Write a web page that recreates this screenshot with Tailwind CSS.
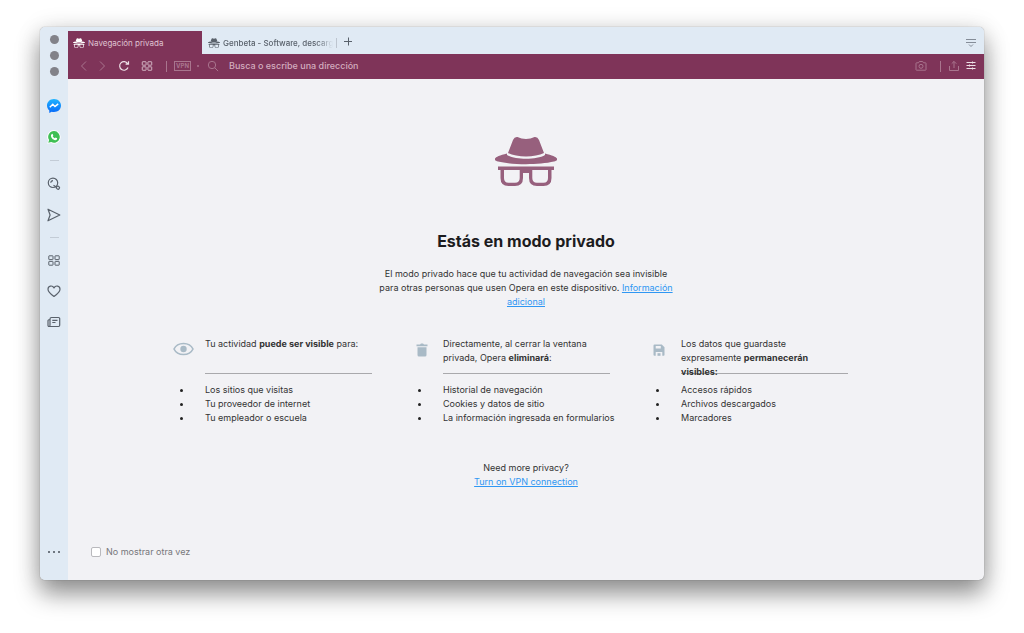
<!DOCTYPE html>
<html lang="es">
<head>
  <meta charset="UTF-8">
  <meta name="viewport" content="width=device-width, initial-scale=1.0">
  <title>Navegación privada</title>
  <script src="https://cdn.jsdelivr.net/npm/@tailwindcss/browser@4"></script>
</head>
<body class="flex min-h-screen bg-white px-10 pt-[27px] pb-[53px] font-[Inter,sans-serif] text-[#333]">

  <!-- Iconos compartidos -->
  <svg class="hidden">
    <symbol id="incognito" viewBox="0 0 62 50">
      <path d="M13 17 18 4Q19.500 .5 22.500 1C25 2 28 3 31 3S37 2 39.500 1Q42.500 .5 44 4L49 17C40 21.500 22 21.500 13 17Z"/>
      <path d="M12 17.500C-1 20.500-3 24 3 25.500C18 29 44 29 59 25.500C65 24 63 20.500 50 17.500L50 19C42 24 20 24 12 19Z"/>
      <path fill-rule="evenodd" d="M3 30.500H59V34H56.500V42Q56.500 50 48.500 50H42Q34 50 34 42V37H28V42Q28 50 20 50H13.500Q5.500 50 5.500 42V34H3ZM9 34V42Q9 46.700 13.500 46.700H20Q24.700 46.700 24.700 42V34ZM37.300 34V42Q37.300 46.700 42 46.700H48.500Q53 46.700 53 42V34Z"/>
    </symbol>
    <symbol id="grid" viewBox="0 0 12 11">
      <g fill="none" stroke="currentColor"><rect x=".8" y=".8" width="4.200" height="3.800" rx=".4"/><rect x="7" y=".8" width="4.200" height="3.800" rx=".4"/><rect x=".8" y="6.400" width="4.200" height="3.800" rx=".4"/><rect x="7" y="6.400" width="4.200" height="3.800" rx=".4"/></g>
    </symbol>
  </svg>

  <div class="flex flex-1 overflow-hidden rounded-[5px] bg-[#f2f2f5] shadow-[0_0_1px_#0008,0_14px_24px_#0006,0_2px_24px_#0002]">

    <!-- Barra lateral -->
    <aside class="flex w-7 shrink-0 flex-col items-center bg-[#e0eaf4] text-[#59616b]">
      <div class="mt-2 flex flex-col gap-[7px]">
        <button aria-label="Cerrar" class="size-[9px] rounded-full bg-[#828289]"></button>
        <button aria-label="Minimizar" class="size-[9px] rounded-full bg-[#828289]"></button>
        <button aria-label="Maximizar" class="size-[9px] rounded-full bg-[#828289]"></button>
      </div>
      <button aria-label="Messenger" class="mt-[22px]">
        <svg class="size-4" viewBox="0 0 16 16">
          <defs><linearGradient id="msg" x2="0" y2="1"><stop stop-color="#1fb4ff"/><stop offset="1" stop-color="#0768f8"/></linearGradient></defs>
          <path fill="url(#msg)" d="M8 1C3.900 1 1 3.900 1 7.600C1 9.700 1.900 11.300 3.300 12.500V15L5.600 13.800C6.400 14 7.200 14.100 8 14.100C12.100 14.100 15 11.300 15 7.600S12.100 1 8 1Z"/>
          <path fill="none" stroke="#fff" stroke-width="1.400" d="m3.800 9.300 3-3.100L9 8.600l3.200-2.700"/>
        </svg>
      </button>
      <button aria-label="WhatsApp" class="mt-[15px]">
        <svg class="size-4" viewBox="0 0 16 16">
          <path fill="#fff" d="M8 1.300A6.600 6.600 0 0 1 8 14.700Q6.500 14.700 4.800 13.900L1.300 14.800 2.200 11.500A6.700 6.700 0 0 1 8 1.300Z"/>
          <path fill="#3fbf54" d="M8.100 2.100A5.800 5.800 0 1 1 5.200 13L2.300 13.800 3.100 11A5.800 5.800 0 0 1 8.100 2.100Z"/>
          <path fill="#fff" d="M6 4.900Q6.600 4.600 6.800 5.200L7.300 6.300Q7.300 6.600 6.700 7.200Q7.400 8.600 8.900 9.300L9.600 8.500 11.200 9.300Q11.200 11.200 9.300 11.200C7 10.900 4.700 8.800 5 6.300Q5.200 5.200 6 4.900Z"/>
        </svg>
      </button>
      <hr class="mt-[15px] w-[9px] border-[#c3ccd6]">
      <button aria-label="Buscar" class="mt-[15px]">
        <svg class="size-4" viewBox="0 0 16 16" fill="none" stroke="currentColor" stroke-width="1.200">
          <circle cx="7" cy="6.800" r="4.700"/><path d="M4.800 6.800A2.200 2.200 0 0 1 7 4.600M7.500 9.200 11 11.500"/><rect x="10.300" y="10.300" width="3.200" height="2.800" rx="1.300" transform="rotate(35 12 11.700)"/>
        </svg>
      </button>
      <button aria-label="Mi Flow" class="mt-[15px]">
        <svg class="size-4" viewBox="0 0 16 16" fill="none" stroke="currentColor" stroke-width="1.200" stroke-linejoin="round">
          <path d="m2 2.200 11.800 5.800L2 13.800 4.100 8Z"/>
        </svg>
      </button>
      <hr class="mt-[14px] w-[9px] border-[#c3ccd6]">
      <button aria-label="Acceso rápido" class="mt-[17px]"><svg class="h-[11px] w-3"><use href="#grid"/></svg></button>
      <button aria-label="Favoritos" class="mt-[17px]">
        <svg class="size-4" viewBox="0 0 16 16" fill="none" stroke="currentColor" stroke-width="1.200" stroke-linejoin="round">
          <path d="M8 13.500C5 11.300 2 8.900 2 6.200C2 2.700 6.400 1.800 8 4.900C9.600 1.800 14 2.700 14 6.200C14 8.900 11 11.300 8 13.500Z"/>
        </svg>
      </button>
      <button aria-label="Noticias" class="mt-[15px]">
        <svg class="size-4" viewBox="0 0 16 16" fill="none" stroke="currentColor" stroke-width="1.200">
          <path d="M4 12.500H12.500Q13.700 12.500 13.700 11.300V4.700Q13.700 3.500 12.500 3.500H5.500Q4 3.500 4 5V11.300Q4 12.500 3 12.500Q2 12.500 2 11.300V6.500Q2 5.500 4 5.500M6.300 6.300H11.500M6.300 8.500H9.500"/>
        </svg>
      </button>
      <button aria-label="Más" class="mt-auto mb-[27px] flex gap-[3px]">
        <span class="size-[2px] rounded-full bg-[#4a515b]"></span>
        <span class="size-[2px] rounded-full bg-[#4a515b]"></span>
        <span class="size-[2px] rounded-full bg-[#4a515b]"></span>
      </button>
    </aside>

    <div class="flex min-w-0 flex-1 flex-col">

      <!-- Pestañas -->
      <div class="flex h-[27px] items-end bg-[#e0eaf4] text-[8px]">
        <button class="flex h-[23px] w-[134px] items-center gap-[3px] bg-[#7f3459] pl-[5px] text-[#dfc3d1]">
          <svg class="h-[10px] w-3 fill-white"><use href="#incognito"/></svg>
          Navegación privada
        </button>
        <button class="flex h-[23px] w-[134px] items-center gap-[3px] pl-[6px] text-[#59616b]">
          <svg class="h-[10px] w-3 shrink-0 fill-[#59616b]"><use href="#incognito"/></svg>
          <span class="w-[110px] overflow-hidden mask-r-from-85% text-left font-medium whitespace-nowrap">Genbeta - Software, descargas</span>
        </button>
        <button aria-label="Nueva pestaña" class="flex h-[23px] items-center">
          <span class="h-[10px] border-l border-[#bdc5cf]"></span>
          <svg class="ml-[6px] mb-1 size-[10px]" viewBox="0 0 10 10" fill="none" stroke="#59616b"><path d="M1 5.500h8M5.500 1.500v8"/></svg>
        </button>
        <button aria-label="Menú de pestañas" class="mr-2 mb-[6px] ml-auto">
          <svg class="size-[10px]" viewBox="0 0 10 10" fill="none" stroke="#858d98"><path d="M0 1.500h10M0 4.500h10"/><path d="m3 6.500 2 2 2-2"/></svg>
        </button>
      </div>

      <!-- Barra de direcciones -->
      <div class="flex h-[25px] items-center bg-[#7f3459] pr-2 pb-px pl-[11px] text-[#a9758e]">
        <button aria-label="Atrás"><svg class="size-[10px]" viewBox="0 0 10 10" fill="none" stroke="currentColor"><path d="m7 .5L2.500 5 7 9.500"/></svg></button>
        <button aria-label="Adelante" class="ml-2"><svg class="size-[10px]" viewBox="0 0 10 10" fill="none" stroke="currentColor"><path d="m3 .5L7.500 5 3 9.500"/></svg></button>
        <button aria-label="Recargar" class="ml-[11px] text-[#eee0e7]">
          <svg class="size-3" viewBox="0 0 12 12" fill="none" stroke="currentColor" stroke-width="1.200"><path d="M10 7.500A4.300 4.300 0 1 1 9.600 3.600M7.600 4.200H10.500V1.300"/></svg>
        </button>
        <button aria-label="Inicio" class="ml-[11px] text-[#d9bfcc]"><svg class="h-[10px] w-3"><use href="#grid"/></svg></button>
        <span class="ml-[13px] h-[11px] border-l border-[#a9758e]"></span>
        <button class="ml-[7px] h-[10px] w-[17px] border border-[#a9758e] text-[6px] leading-[8px] font-bold">VPN</button>
        <span class="ml-[6px] size-[2px] rounded-full bg-[#a9758e]"></span>
        <svg class="ml-2 size-3" viewBox="0 0 12 12" fill="none" stroke="currentColor"><circle cx="5" cy="5" r="3.700"/><path d="m7.700 7.700 3.400 3.400"/></svg>
        <input type="text" aria-label="Dirección" placeholder="Busca o escribe una dirección" class="ml-[10px] min-w-0 flex-1 text-[9px] font-medium outline-none placeholder:text-[#d3adbf]">
        <button aria-label="Instantánea">
          <svg class="size-3" viewBox="0 0 12 12" fill="none" stroke="currentColor"><path d="M1.500 2.800H3.500L4.300 1.500H7.700L8.500 2.800H10.500Q11 2.800 11 3.300V9.700Q11 10.200 10.500 10.200H1.500Q1 10.200 1 9.700V3.300Q1 2.800 1.500 2.800Z"/><circle cx="6" cy="6.300" r="2"/></svg>
        </button>
        <span class="ml-[13px] h-[11px] border-l border-[#a9758e]"></span>
        <button aria-label="Compartir" class="ml-[7px]">
          <svg class="size-3" viewBox="0 0 12 12" fill="none" stroke="currentColor"><path d="M1.500 6V10.500H10.500V6M6 8V1.500M3.700 3.700 6 1.400l2.300 2.300"/></svg>
        </button>
        <button aria-label="Configuración fácil" class="ml-[6px] text-[#eee0e7]">
          <svg class="size-[10px]" viewBox="0 0 10 10" fill="none" stroke="currentColor"><path d="M.5 1.500h9M.5 4.500h9M.5 7.500h9M6.500 .5v2M3.500 3.500v2M6.500 6.500v2"/></svg>
        </button>
      </div>

      <!-- Contenido -->
      <main class="flex flex-1 flex-col items-center text-[9px] leading-[14px]">
        <svg class="mt-[57px] h-[50px] w-[62px] fill-[#97607d]"><use href="#incognito"/></svg>
        <h1 class="mt-[43px] text-base leading-6 font-bold text-[#1c1c1e]">Estás en modo privado</h1>
        <p class="mt-[14px] w-[300px] text-center">El modo privado hace que tu actividad de navegación sea invisible para otras personas que usen Opera en este dispositivo. <a href="#" class="text-[#2f97f3] underline">Información adicional</a></p>

        <div class="mt-7 grid grid-cols-[repeat(3,238px)]">
          <section>
            <div class="flex">
              <div class="w-9 shrink-0 pt-[5px] pl-1">
                <svg class="h-[14px] w-[21px]" viewBox="0 0 21 14" fill="none" stroke="#a9bac6" stroke-width="1.600"><path d="M1 7C4.500-.4 16.500-.4 20 7C16.500 14.400 4.500 14.400 1 7Z"/><circle cx="10.500" cy="7" r="3.200" fill="#a9bac6" stroke="none"/></svg>
              </div>
              <p class="h-[37px] w-[167px] border-b border-[#a9a9ac] pr-2">Tu actividad <b>puede ser visible</b> para:</p>
            </div>
            <ul class="mt-[9px] pl-9">
              <li class="relative before:absolute before:top-[6px] before:-left-[25px] before:size-[3px] before:rounded-full before:bg-[#222]">Los sitios que visitas</li>
              <li class="relative before:absolute before:top-[6px] before:-left-[25px] before:size-[3px] before:rounded-full before:bg-[#222]">Tu proveedor de internet</li>
              <li class="relative before:absolute before:top-[6px] before:-left-[25px] before:size-[3px] before:rounded-full before:bg-[#222]">Tu empleador o escuela</li>
            </ul>
          </section>
          <section>
            <div class="flex">
              <div class="w-9 shrink-0 pt-[6px] pl-[9px]">
                <svg class="h-[14px] w-3 fill-[#a9bac6]" viewBox="0 0 12 14"><path d="M.5 1.500H4L5 .5H7L8 1.500H11.500V3.300H.5ZM1.500 4.200H10.500V12Q10.500 13.500 9 13.500H3Q1.500 13.500 1.500 12Z"/></svg>
              </div>
              <p class="h-[37px] w-[167px] border-b border-[#a9a9ac] pr-2">Directamente, al cerrar la ventana privada, Opera <b>eliminará</b>:</p>
            </div>
            <ul class="mt-[9px] pl-9">
              <li class="relative before:absolute before:top-[6px] before:-left-[25px] before:size-[3px] before:rounded-full before:bg-[#222]">Historial de navegación</li>
              <li class="relative before:absolute before:top-[6px] before:-left-[25px] before:size-[3px] before:rounded-full before:bg-[#222]">Cookies y datos de sitio</li>
              <li class="relative before:absolute before:top-[6px] before:-left-[25px] before:size-[3px] before:rounded-full before:bg-[#222]">La información ingresada en formularios</li>
            </ul>
          </section>
          <section>
            <div class="flex">
              <div class="w-9 shrink-0 pt-[7px] pl-2">
                <svg class="size-3 fill-[#a9bac6]" viewBox="0 0 12 12"><path fill-rule="evenodd" d="M1.500.5H8.800L11.500 3.200V11Q11.500 11.800 10.500 11.800H9.300V8H2.700V11.800H1.500Q.5 11.800.5 10.800V1.500Q.5.500 1.500.5ZM2.700 2V4.500H7.800V2Z"/><path d="M4.500 9.200H7.500V11.800H4.500Z"/></svg>
              </div>
              <p class="h-[37px] w-[167px] border-b border-[#a9a9ac] pr-2">Los datos que guardaste expresamente <b>permanecerán visibles:</b></p>
            </div>
            <ul class="mt-[9px] pl-9">
              <li class="relative before:absolute before:top-[6px] before:-left-[25px] before:size-[3px] before:rounded-full before:bg-[#222]">Accesos rápidos</li>
              <li class="relative before:absolute before:top-[6px] before:-left-[25px] before:size-[3px] before:rounded-full before:bg-[#222]">Archivos descargados</li>
              <li class="relative before:absolute before:top-[6px] before:-left-[25px] before:size-[3px] before:rounded-full before:bg-[#222]">Marcadores</li>
            </ul>
          </section>
        </div>

        <div class="mt-9 text-center">
          <p>Need more privacy?</p>
          <a href="#" class="text-[#2f97f3] underline">Turn on VPN connection</a>
        </div>

        <label class="mt-auto mb-[21px] flex items-center gap-[5px] self-start pl-[23px] text-[#77777b]">
          <input type="checkbox" class="size-[10px] appearance-none rounded-[2px] border border-[#b9b9bd] bg-white checked:bg-[#2f97f3]">
          No mostrar otra vez
        </label>
      </main>
    </div>
  </div>
</body>
</html>
